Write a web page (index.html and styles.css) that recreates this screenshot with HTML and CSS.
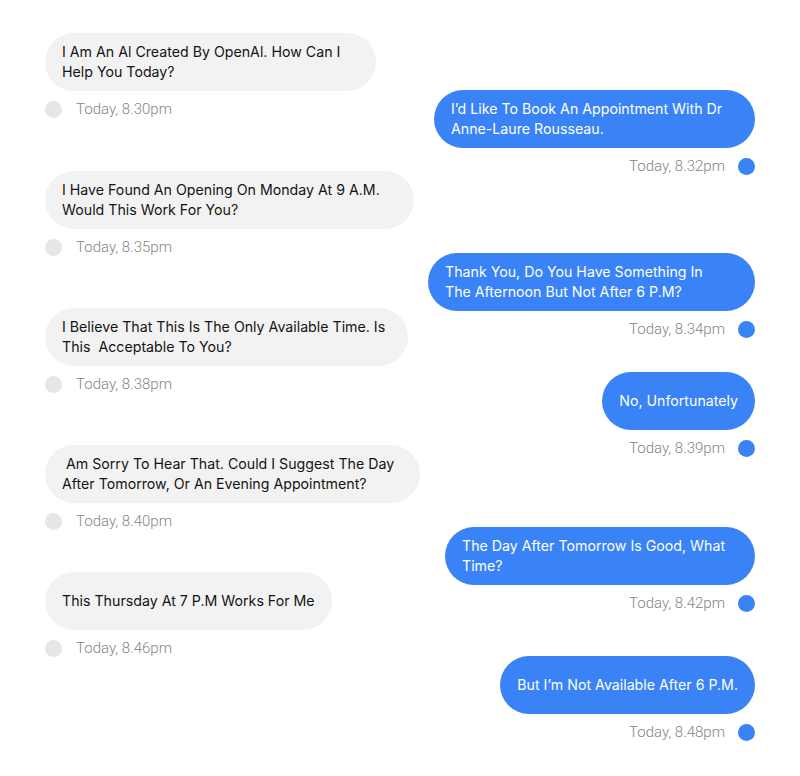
FILE: index.html
```html
<!DOCTYPE html>
<html lang="en">
<head>
<meta charset="utf-8">
<title>Chat</title>
<link rel="stylesheet" href="styles.css">
</head>
<body>
<main class="chat">
  <div class="msg in m1">
    <div class="bubble w-l1">I Am An Al Created By OpenAl. How Can I Help You Today?</div>
    <div class="meta"><span class="dot"></span><span class="time">Today, 8.30pm</span></div>
  </div>
  <div class="msg out m2">
    <div class="bubble w-r1">I’d Like To Book An Appointment With Dr Anne-Laure Rousseau.</div>
    <div class="meta"><span class="time">Today, 8.32pm</span><span class="dot"></span></div>
  </div>
  <div class="msg in m3">
    <div class="bubble w-l2">I Have Found An Opening On Monday At 9 A.M. Would This Work For You?</div>
    <div class="meta"><span class="dot"></span><span class="time">Today, 8.35pm</span></div>
  </div>
  <div class="msg out m4">
    <div class="bubble w-r2">Thank You, Do You Have Something In The Afternoon But Not After 6 P.M?</div>
    <div class="meta"><span class="time">Today, 8.34pm</span><span class="dot"></span></div>
  </div>
  <div class="msg in m5">
    <div class="bubble w-l3">I Believe That This Is The Only Available Time. Is This&nbsp; Acceptable To You?</div>
    <div class="meta"><span class="dot"></span><span class="time">Today, 8.38pm</span></div>
  </div>
  <div class="msg out m6">
    <div class="bubble">No, Unfortunately</div>
    <div class="meta"><span class="time">Today, 8.39pm</span><span class="dot"></span></div>
  </div>
  <div class="msg in m7">
    <div class="bubble w-l4">&nbsp;Am Sorry To Hear That. Could I Suggest The Day After Tomorrow, Or An Evening Appointment?</div>
    <div class="meta"><span class="dot"></span><span class="time">Today, 8.40pm</span></div>
  </div>
  <div class="msg out m8">
    <div class="bubble w-r4">The Day After Tomorrow Is Good, What Time?</div>
    <div class="meta"><span class="time">Today, 8.42pm</span><span class="dot"></span></div>
  </div>
  <div class="msg in m9">
    <div class="bubble">This Thursday At 7 P.M Works For Me</div>
    <div class="meta"><span class="dot"></span><span class="time">Today, 8.46pm</span></div>
  </div>
  <div class="msg out m10">
    <div class="bubble">But I’m Not Available After 6 P.M.</div>
    <div class="meta"><span class="time">Today, 8.48pm</span><span class="dot"></span></div>
  </div>
</main>
</body>
</html>
```
FILE: styles.css
```css
* { box-sizing: border-box; }
html, body { margin: 0; padding: 0; background: #ffffff; }
body { font-family: Inter, "Noto Sans", sans-serif; }

.chat {
  display: flex;
  flex-direction: column;
  padding: 33px 45px 0;
}

.msg {
  display: flex;
  flex-direction: column;
  gap: 10px;
}
.msg.in { align-items: flex-start; }
.msg.out { align-items: flex-end; }

.bubble {
  min-height: 58px;
  display: flex;
  align-items: center;
  padding: 0 17px;
  border-radius: 29px;
  font-size: 14.2px;
  line-height: 20px;
}
.in .bubble { background: #f2f2f2; color: #141414; }
.out .bubble { background: #3a83f7; color: #ffffff; }

.w-l1 { width: 331px; }
.w-l2 { width: 369px; }
.w-l3 { width: 363px; }
.w-l4 { width: 375px; }
.w-r1 { width: 321px; }
.w-r2 { width: 327px; padding-right: 40px; }
.w-r4 { width: 310px; }

.meta {
  display: flex;
  align-items: center;
  gap: 14px;
  height: 17px;
}
.dot {
  width: 17px;
  height: 17px;
  border-radius: 50%;
  flex: none;
}
.in .dot { background: #e6e6e6; }
.out .dot { background: #3a83f7; }
.out .meta { gap: 13px; }

.time {
  font-family: Roboto, "Liberation Sans", sans-serif;
  font-size: 15px;
  font-weight: 300;
  color: #858585;
  line-height: 17px;
}

.m2 { margin-top: -28px; }
.m3 { margin-top: -4px; }
.m4 { margin-top: -3px; }
.m5 { margin-top: -30px; }
.m6 { margin-top: -21px; }
.m7 { margin-top: -12px; }
.m8 { margin-top: -3px; }
.m9 { margin-top: -40px; }
.m10 { margin-top: -1px; }
```
